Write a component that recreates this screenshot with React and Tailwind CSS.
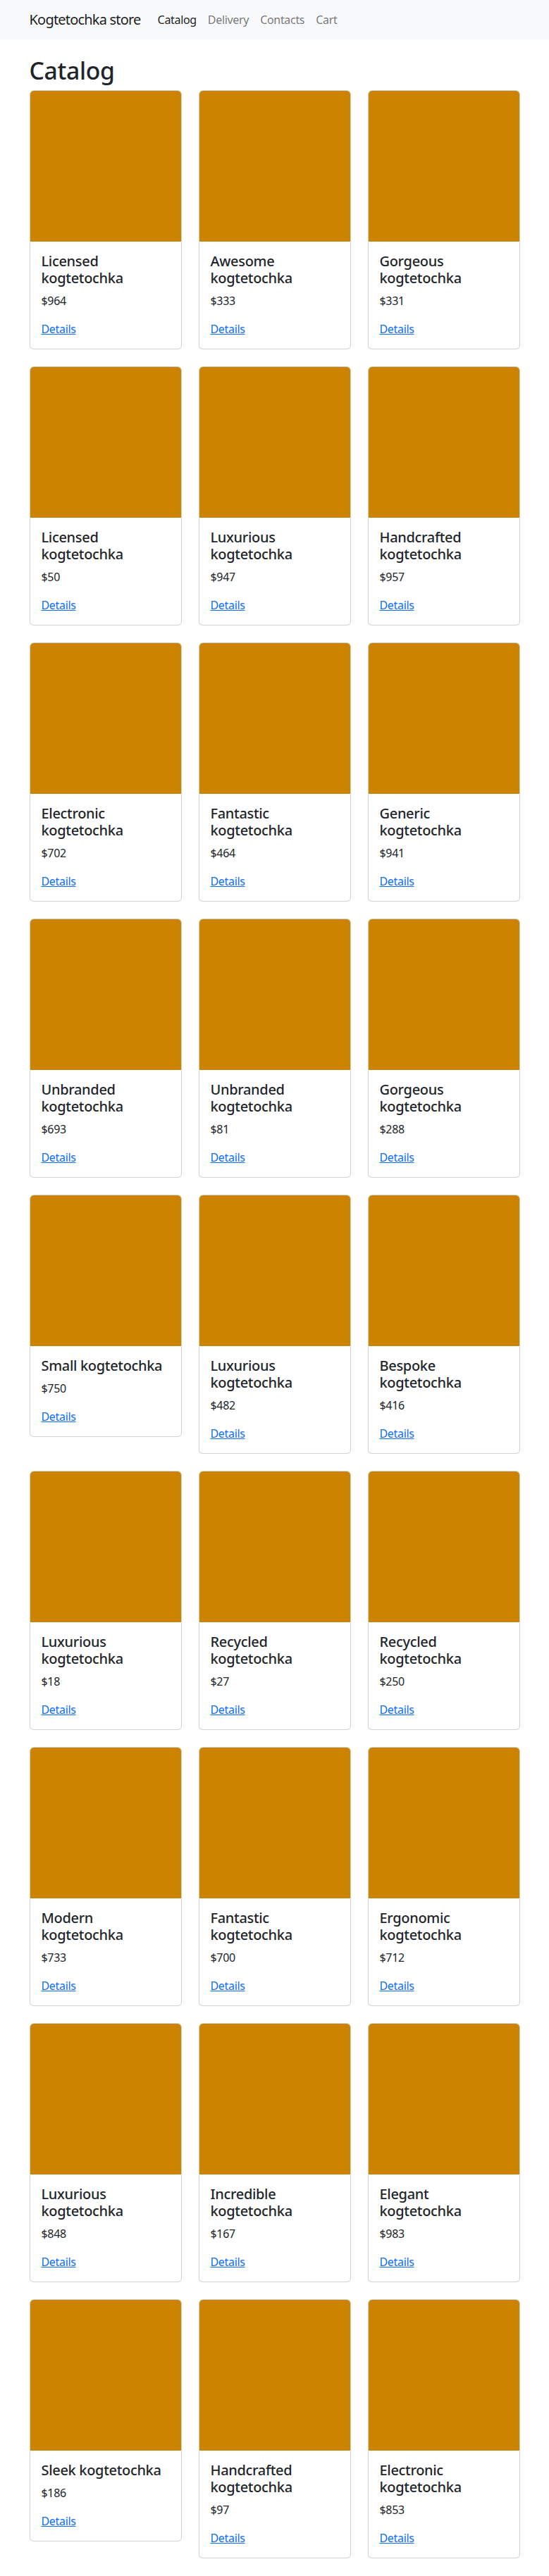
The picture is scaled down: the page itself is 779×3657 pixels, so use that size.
import React from 'react';

const products = [
  ['Licensed kogtetochka', 964], ['Awesome kogtetochka', 333], ['Gorgeous kogtetochka', 331],
  ['Licensed kogtetochka', 50], ['Luxurious kogtetochka', 947], ['Handcrafted kogtetochka', 957],
  ['Electronic kogtetochka', 702], ['Fantastic kogtetochka', 464], ['Generic kogtetochka', 941],
  ['Unbranded kogtetochka', 693], ['Unbranded kogtetochka', 81], ['Gorgeous kogtetochka', 288],
  ['Small kogtetochka', 750], ['Luxurious kogtetochka', 482], ['Bespoke kogtetochka', 416],
  ['Luxurious kogtetochka', 18], ['Recycled kogtetochka', 27], ['Recycled kogtetochka', 250],
  ['Modern kogtetochka', 733], ['Fantastic kogtetochka', 700], ['Ergonomic kogtetochka', 712],
  ['Luxurious kogtetochka', 848], ['Incredible kogtetochka', 167], ['Elegant kogtetochka', 983],
  ['Sleek kogtetochka', 186], ['Handcrafted kogtetochka', 97], ['Electronic kogtetochka', 853],
];

const ProductCard = ({ name, price }) => (
  <div className="flex flex-col rounded-[6px] border border-black/[0.175] bg-white">
    <div className="aspect-square w-full rounded-t-[5px] bg-[#cc8400]"></div>
    <div className="p-4">
      <h5 className="mb-2 text-[20px] font-medium leading-[1.2] text-[#212529]">{name}</h5>
      <p className="mb-4 text-base leading-6 text-[#212529]">${price}</p>
      <a href="#" className="text-base leading-6 text-[#0d6efd] underline">Details</a>
    </div>
  </div>
);

const App = () => {
  return (
    <div className="min-h-screen bg-white font-['Noto_Sans',sans-serif] tracking-[-0.02em] text-[#212529]">
      {/* Navbar */}
      <nav className="bg-[#f8f9fa] py-2">
        <div className="mx-auto flex w-[720px] items-center px-3">
          <a href="#" className="mr-4 py-[5px] text-[20px] leading-[30px] tracking-[-0.04em] text-black/90">Kogtetochka store</a>
          <div className="flex">
            <a href="#" className="px-2 py-2 text-base leading-6 text-black/90">Catalog</a>
            <a href="#" className="px-2 py-2 text-base leading-6 text-black/55">Delivery</a>
            <a href="#" className="px-2 py-2 text-base leading-6 text-black/55">Contacts</a>
            <a href="#" className="px-2 py-2 text-base leading-6 text-black/55">Cart</a>
          </div>
        </div>
      </nav>

      <main className="mx-auto w-[720px] px-3 pt-6 pb-6">
        <h1 className="mb-2 text-[33.7px] font-medium leading-[1.2]">Catalog</h1>
        <div className="grid grid-cols-3 items-start gap-6">
          {products.map(([name, price], i) => (
            <ProductCard key={i} name={name} price={price} />
          ))}
        </div>
      </main>
    </div>
  );
};

export default App;
